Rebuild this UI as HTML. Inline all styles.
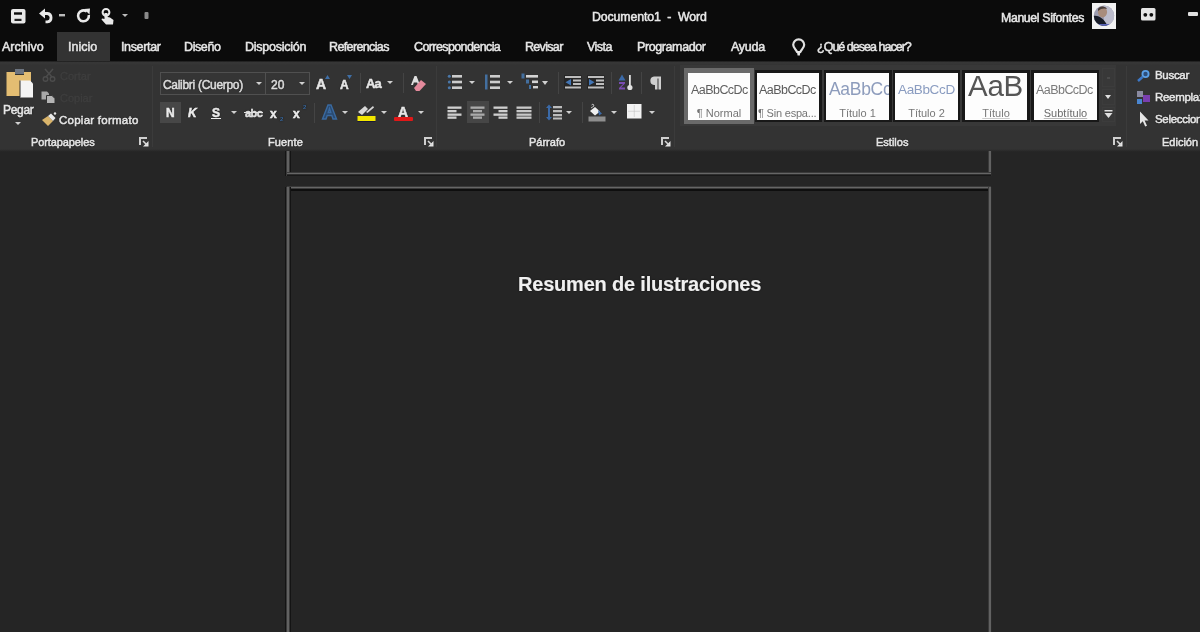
<!DOCTYPE html>
<html><head><meta charset="utf-8">
<style>
*{margin:0;padding:0;box-sizing:border-box}
html,body{width:1200px;height:632px;overflow:hidden;background:#252525}
body{position:relative;font-family:"Liberation Sans",sans-serif;color:#e8e8e8}
.a{position:absolute}
svg.a{overflow:visible}
.t{position:absolute;white-space:nowrap;line-height:1;-webkit-text-stroke:0.5px currentColor;will-change:transform;text-shadow:0 0 1.5px rgba(0,0,0,0.9)}
#top{left:0;top:0;width:1200px;height:61px;background:#0b0b0b}
#ribbon{left:0;top:61px;width:1200px;height:90px;background:#333}
.sep{position:absolute;width:1px;background:#444}
.gsep{position:absolute;width:1px;top:66px;height:81px;background:#3b3b3b}
.tab{font-size:12.5px;color:#e6e6e6;top:40.5px}
.lbl{font-size:11px;color:#e6e6e6;top:137px}
.arr{position:absolute;width:0;height:0;border-left:3px solid transparent;border-right:3px solid transparent;border-top:3px solid #d0d0d0}
.sty{position:absolute;top:73px;height:47px;background:#fdfdfd;overflow:hidden;border:0}
.sty .p{position:absolute;left:0;width:100%;text-align:center;white-space:nowrap;line-height:1;font-size:10px;color:#555;will-change:transform}
.sty .s{position:absolute;white-space:nowrap;line-height:1;will-change:transform}
</style></head><body>
<div id="top" class="a"></div>
<div id="ribbon" class="a"></div>
<div class="a" style="left:0;top:61px;width:1200px;height:4px;background:linear-gradient(#1a1a1a,#383838 40%,#333)"></div>
<div class="a" style="left:0;top:149px;width:1200px;height:3px;background:linear-gradient(#333,#242424)"></div>

<!-- QAT -->
<svg class="a" style="left:11px;top:9px" width="15" height="15" viewBox="0 0 15 15">
  <rect x="0" y="0" width="14.5" height="14.5" rx="2" fill="#e8e8e8"/>
  <rect x="3" y="3.3" width="8" height="2.4" fill="#0b0b0b"/>
  <rect x="3.5" y="9.8" width="7" height="2.2" fill="#222"/>
</svg>
<svg class="a" style="left:39px;top:8px" width="15" height="15" viewBox="0 0 15 15">
  <path d="M0 5.5 L6 0.5 L6 10.5 Z" fill="#e8e8e8"/>
  <path d="M4.5 5.5 H8.5 A4.2 4.2 0 0 1 8.5 13.8 H6.5" fill="none" stroke="#e8e8e8" stroke-width="2.8"/>
</svg>
<svg class="a" style="left:59px;top:14px" width="6" height="3"><rect width="6" height="2.4" fill="#bbb"/></svg>
<svg class="a" style="left:76px;top:8px" width="15" height="15" viewBox="0 0 15 15">
  <path d="M10.8 3.6 A5.4 5.4 0 1 0 12.8 7" fill="none" stroke="#e8e8e8" stroke-width="2.6"/>
  <path d="M8 1 L14 0.5 L13.5 6.5 Z" fill="#e8e8e8"/>
</svg>
<svg class="a" style="left:101px;top:8px" width="13" height="17" viewBox="0 0 13 17">
  <circle cx="5" cy="4.3" r="3.4" fill="none" stroke="#e8e8e8" stroke-width="2"/>
  <path d="M3.5 5 V11 L1 10.5 L0.5 11.5 L5 16.5 H12 L12.5 12 L9 9.5 L6.5 9 V5 Z" fill="#e8e8e8"/>
</svg>
<div class="arr" style="left:122px;top:14px;border-top-color:#bbb"></div>
<svg class="a" style="left:144px;top:12px" width="6" height="8"><rect x="0.5" y="0" width="4" height="7" rx="1" fill="#8a8a8a"/></svg>

<!-- title -->
<div class="t" style="left:592px;top:11px;font-size:12.3px;letter-spacing:-0.1px;color:#e8e8e8">Documento1&nbsp; -&nbsp; Word</div>
<div class="t" style="left:1001px;top:12px;font-size:12.3px;letter-spacing:-0.35px;color:#e8e8e8">Manuel Sifontes</div>
<svg class="a" style="left:1092px;top:3px" width="24" height="26" viewBox="0 0 24 26">
  <defs><clipPath id="av"><ellipse cx="12" cy="12.8" rx="10.2" ry="10.3"/></clipPath></defs>
  <rect x="0" y="0" width="24" height="26" fill="#f2f2f2"/>
  <g clip-path="url(#av)">
    <rect x="0" y="0" width="24" height="26" fill="#9c9cb0"/>
    <rect x="12" y="2" width="12" height="22" fill="#bcbccc"/>
    <ellipse cx="10.5" cy="9" rx="4.6" ry="5.4" fill="#a88c7c"/>
    <path d="M6 6 C7 3 13 2.5 15 6 C13 5 9 5 6 8 Z" fill="#4a3e3a"/>
    <path d="M1 13 C4 12 8 13.5 10 15.5 C13 18 15 21 16 25 H1 Z" fill="#181c28"/>
    <path d="M7 21 H18 V26 H7 Z" fill="#5a64b8"/>
  </g>
</svg>
<svg class="a" style="left:1141px;top:8px" width="15" height="13" viewBox="0 0 15 13">
  <rect x="0" y="0" width="14.5" height="12.5" rx="1.5" fill="#e4e4e4"/>
  <circle cx="4.3" cy="6.8" r="1.9" fill="#0b0b0b"/><circle cx="10.3" cy="6.8" r="1.9" fill="#0b0b0b"/>
</svg>
<div class="a" style="left:1188px;top:12px;width:10px;height:3.5px;background:#e0e0e0;border-radius:1px"></div>

<!-- tabs -->
<div class="a" style="left:57px;top:32px;width:53px;height:29px;background:#333"></div>
<div class="t tab" style="left:2px">Archivo</div>
<div class="t tab" style="left:68px">Inicio</div>
<div class="t tab" style="left:121px;letter-spacing:-0.35px">Insertar</div>
<div class="t tab" style="left:184px;letter-spacing:-0.4px">Diseño</div>
<div class="t tab" style="left:245px;letter-spacing:-0.25px">Disposición</div>
<div class="t tab" style="left:329px;letter-spacing:-0.63px">Referencias</div>
<div class="t tab" style="left:414px;letter-spacing:-0.6px">Correspondencia</div>
<div class="t tab" style="left:525px;letter-spacing:-0.68px">Revisar</div>
<div class="t tab" style="left:587px;letter-spacing:-0.55px">Vista</div>
<div class="t tab" style="left:637px;letter-spacing:-0.4px">Programador</div>
<div class="t tab" style="left:731px;letter-spacing:-0.25px">Ayuda</div>
<svg class="a" style="left:792px;top:38px" width="14" height="19" viewBox="0 0 14 19">
  <path d="M6.7 1.3 A5.5 5.5 0 0 1 12.2 6.8 C12.2 9.5 9.5 11.5 8.3 14 H5.1 C3.9 11.5 1.2 9.5 1.2 6.8 A5.5 5.5 0 0 1 6.7 1.3 Z" fill="none" stroke="#e0e0e0" stroke-width="2.2"/>
  <path d="M4.8 13 H8.6 L7.8 17.5 H5.6 Z" fill="#e8e8e8"/>
</svg>
<div class="t tab" style="left:817px;letter-spacing:-0.98px">¿Qué desea hacer?</div>

<!-- ===== Portapapeles ===== -->
<svg class="a" style="left:6px;top:68px" width="28" height="31" viewBox="0 0 28 31">
  <path d="M0.5 4 H9 V7 H18 V4 H25 V28 H0.5 Z" fill="#e3bd72"/>
  <rect x="9" y="1" width="9" height="5" fill="#6c7480"/>
  <path d="M14 12.5 H24 L27 15.5 V29.5 H14 Z" fill="#f4f4f4"/>
  <path d="M14 12.5 V29.5" stroke="#2e2e2e" stroke-width="1"/>
</svg>
<div class="t" style="left:3px;top:104px;font-size:12px;letter-spacing:-0.3px;color:#e6e6e6">Pegar</div>
<div class="arr" style="left:15px;top:122px"></div>

<svg class="a" style="left:42px;top:68px" width="14" height="14" viewBox="0 0 14 14">
  <path d="M3 1 L10 9 M11 1 L4 9" stroke="#4c4c4c" stroke-width="1.5"/>
  <circle cx="3.5" cy="11" r="2.3" fill="none" stroke="#4c4c4c" stroke-width="1.4"/>
  <circle cx="10.5" cy="11" r="2.3" fill="none" stroke="#4c4c4c" stroke-width="1.4"/>
</svg>
<div class="t" style="left:60px;top:71px;font-size:11px;color:#3e3e3e;text-shadow:none;-webkit-text-stroke:0.3px #3e3e3e">Cortar</div>
<svg class="a" style="left:41px;top:91px" width="15" height="13" viewBox="0 0 15 13">
  <path d="M0.5 0.5 H6 L8 2.5 V8.5 H0.5 Z" fill="#a8a8a8"/>
  <path d="M5.5 4.5 H11 L14 7.5 V12.5 H5.5 Z" fill="#b4b4b4" stroke="#333" stroke-width="1"/>
</svg>
<div class="t" style="left:60px;top:93px;font-size:11px;color:#3e3e3e;text-shadow:none;-webkit-text-stroke:0.3px #3e3e3e">Copiar</div>
<svg class="a" style="left:41px;top:112px" width="16" height="15" viewBox="0 0 16 15">
  <path d="M1 8 L7 4 L12 9 L7 14 Z" fill="#d9b46a"/>
  <path d="M7 4 L10 1.5 L14.5 6 L12 9 Z" fill="#e8e8e8"/>
  <circle cx="14" cy="1.5" r="1.2" fill="#e8e8e8"/>
</svg>
<div class="t" style="left:59px;top:115px;font-size:11.5px;letter-spacing:0.25px;color:#e6e6e6">Copiar formato</div>

<div class="t lbl" style="left:31px;letter-spacing:-0.1px">Portapapeles</div>
<svg class="a dl" style="left:139px;top:137px" width="10" height="10" viewBox="0 0 10 10">
  <path d="M0 0 H8 V2 H2 V8 H0 Z" fill="#cfcfcf"/>
  <path d="M9.5 4 V9.5 H4 Z" fill="#e6e6e6"/>
  <path d="M4 4 L8 8" stroke="#d8d8d8" stroke-width="1.6"/>
</svg>
<div class="gsep" style="left:152px"></div>

<!-- page -->
<div class="a" style="left:285px;top:151px;width:6px;height:25px;background:linear-gradient(90deg,#141414 0,#141414 1px,#3a3a3a 1px,#3a3a3a 2px,#626262 2px,#626262 4px,#3a3a3a 4px,#3a3a3a 5px,#141414 5px)"></div>
<div class="a" style="left:988px;top:151px;width:4px;height:25px;background:linear-gradient(90deg,#3a3a3a 0,#3a3a3a 1px,#626262 1px,#626262 3px,#2a2a2a 3px)"></div>
<div class="a" style="left:287px;top:172px;width:704px;height:4px;background:linear-gradient(#3a3a3a 0,#3a3a3a 1px,#666 1px,#666 2px,#2e2e2e 2px,#2e2e2e 3px,#181818 3px)"></div>
<div class="a" style="left:287px;top:186px;width:704px;height:5px;background:linear-gradient(#3a3a3a 0,#3a3a3a 1px,#666 1px,#666 2px,#3a3a3a 2px,#3a3a3a 3px,#0e0e0e 3px)"></div>
<div class="a" style="left:285px;top:187px;width:6px;height:445px;background:linear-gradient(90deg,#141414 0,#141414 1px,#3a3a3a 1px,#3a3a3a 2px,#626262 2px,#626262 4px,#3a3a3a 4px,#3a3a3a 5px,#141414 5px)"></div>
<div class="a" style="left:988px;top:187px;width:4px;height:445px;background:linear-gradient(90deg,#3a3a3a 0,#3a3a3a 1px,#626262 1px,#626262 3px,#2a2a2a 3px)"></div>
<div class="t" style="left:518px;top:273.5px;font-size:20px;font-weight:700;letter-spacing:-0.2px;color:#f0f0f0;-webkit-text-stroke:0.15px #f0f0f0">Resumen de ilustraciones</div>

<!-- ===== Fuente ===== -->
<div class="a" style="left:160px;top:72px;width:106px;height:23px;background:#353535;border:1px solid #505050"></div>
<div class="a" style="left:265px;top:72px;width:45px;height:23px;background:#353535;border:1px solid #505050"></div>
<div class="t" style="left:163px;top:79px;font-size:12px;letter-spacing:-0.3px;color:#dedede">Calibri (Cuerpo)</div>
<div class="arr" style="left:256px;top:82px"></div>
<div class="t" style="left:271px;top:79px;font-size:12px;color:#dedede">20</div>
<div class="arr" style="left:299px;top:82px"></div>

<div class="a" style="left:160px;top:102px;width:21px;height:21px;background:#474747"></div>
<div class="t" style="left:166px;top:107px;font-size:12px;font-weight:700;color:#ececec">N</div>
<div class="t" style="left:188px;top:107px;font-size:12px;font-weight:700;font-style:italic;color:#ececec">K</div>
<div class="t" style="left:212px;top:107px;font-size:12px;font-weight:700;color:#ececec">S</div>
<div class="a" style="left:211px;top:118px;width:10px;height:1px;background:#ececec"></div>
<div class="arr" style="left:231px;top:111px"></div>
<div class="t" style="left:245px;top:108px;font-size:11px;font-weight:700;letter-spacing:-0.6px;color:#e0e0e0">abc</div>
<div class="a" style="left:244px;top:112px;width:19px;height:1px;background:#e0e0e0"></div>
<div class="t" style="left:270px;top:108px;font-size:12px;font-weight:700;color:#ececec">x</div>
<div class="t" style="left:280px;top:116px;font-size:6px;font-weight:700;color:#3a6aa0;-webkit-text-stroke:0">2</div>
<div class="t" style="left:293px;top:108px;font-size:12px;font-weight:700;color:#ececec">x</div>
<div class="t" style="left:303px;top:104px;font-size:6px;font-weight:700;color:#3a6aa0;-webkit-text-stroke:0">2</div>
<div class="sep" style="left:314px;top:103px;height:20px"></div>

<div class="t" style="left:316px;top:77px;font-size:14px;font-weight:700;color:#e6e6e6">A</div>
<svg class="a" style="left:325px;top:75px" width="5" height="4"><path d="M0 4 L2.5 0 L5 4 Z" fill="#3f6fa6"/></svg>
<div class="t" style="left:340px;top:79px;font-size:12px;font-weight:700;color:#e6e6e6">A</div>
<svg class="a" style="left:347px;top:75px" width="5" height="4"><path d="M0 0 L5 0 L2.5 4 Z" fill="#3f6fa6"/></svg>
<div class="sep" style="left:360px;top:73px;height:20px"></div>
<div class="t" style="left:366px;top:77px;font-size:13px;font-weight:700;letter-spacing:-0.8px;color:#e6e6e6">Aa</div>
<div class="arr" style="left:387px;top:81px"></div>
<div class="sep" style="left:403px;top:73px;height:20px"></div>
<svg class="a" style="left:410px;top:75px" width="18" height="17" viewBox="0 0 18 17">
  <path d="M1 10 L4.5 1 H6.5 L10 10 H8 L7.2 7.5 H3.8 L3 10 Z" fill="#e0e0e0"/>
  <path d="M4 13 L11 5 L16 9 L9.5 16 H6 Z" fill="#e48a9c"/>
</svg>

<svg class="a" style="left:321px;top:104px" width="17" height="16" viewBox="0 0 17 16">
  <path d="M1.5 15 L7 1 H10 L15.5 15 H12 L10.8 11.5 H6.2 L5 15 Z M7.2 8.5 H9.8 L8.5 4.5 Z" fill="#2a4a70" stroke="#3a6aa0" stroke-width="1.4"/>
</svg>
<div class="arr" style="left:342px;top:111px"></div>
<svg class="a" style="left:357px;top:104px" width="19" height="18" viewBox="0 0 19 18">
  <path d="M1 8 L8 2 L11 5 L5 11 Z" fill="#d8d8d8"/>
  <path d="M9 8 L16 2 L17 3.5 L10.5 9 Z" fill="#d8d8d8"/>
  <rect x="0.5" y="12" width="18" height="5" fill="#f2e600"/>
  <rect x="0.5" y="17" width="18" height="1" fill="#181838"/>
</svg>
<div class="arr" style="left:381px;top:111px"></div>
<div class="t" style="left:398px;top:105px;font-size:14px;font-weight:700;color:#e6e6e6">A</div>
<div class="a" style="left:394px;top:117px;width:19px;height:4px;background:#e01818;border-radius:1px"></div>
<div class="arr" style="left:418px;top:111px"></div>

<div class="t lbl" style="left:268px;letter-spacing:0.1px">Fuente</div>
<svg class="a dl" style="left:424px;top:137px" width="10" height="10" viewBox="0 0 10 10">
  <path d="M0 0 H8 V2 H2 V8 H0 Z" fill="#cfcfcf"/>
  <path d="M9.5 4 V9.5 H4 Z" fill="#e6e6e6"/>
  <path d="M4 4 L8 8" stroke="#d8d8d8" stroke-width="1.6"/>
</svg>
<div class="gsep" style="left:436px"></div>

<!-- ===== Parrafo ===== -->
<svg class="a" style="left:447px;top:74px" width="16" height="16" viewBox="0 0 16 16">
  <g fill="#4a78aa"><circle cx="2.3" cy="2.3" r="1.5"/><circle cx="2.3" cy="8" r="1.5"/><circle cx="2.3" cy="13.7" r="1.5"/></g>
  <g fill="#cccccc"><rect x="5" y="1" width="10" height="2.6"/><rect x="5" y="6.7" width="10" height="2.6"/><rect x="5" y="12.4" width="10" height="2.6"/></g>
</svg>
<div class="arr" style="left:469px;top:81px"></div>
<svg class="a" style="left:485px;top:74px" width="16" height="16" viewBox="0 0 16 16">
  <rect x="0" y="0.5" width="2.5" height="15" fill="#436f9f"/>
  <g fill="#cccccc"><rect x="5" y="1" width="10" height="2.6"/><rect x="5" y="6.7" width="10" height="2.6"/><rect x="5" y="12.4" width="10" height="2.6"/></g>
</svg>
<div class="arr" style="left:507px;top:81px"></div>
<svg class="a" style="left:521px;top:73px" width="18" height="17" viewBox="0 0 18 17">
  <g fill="#436f9f"><rect x="0.5" y="0.5" width="3" height="5"/><rect x="5" y="6.5" width="3" height="4"/><rect x="8" y="12" width="2" height="4"/></g>
  <g fill="#d4d4d4"><rect x="5" y="2" width="12" height="2.6"/><rect x="11" y="7.5" width="6" height="2.6"/><rect x="12" y="13" width="5" height="2.4"/></g>
</svg>
<div class="arr" style="left:542px;top:81px;border-left-width:3.5px;border-right-width:3.5px;border-top-width:4px"></div>
<div class="sep" style="left:558px;top:72px;height:22px"></div>
<svg class="a" style="left:564px;top:75px" width="18" height="15" viewBox="0 0 18 15">
  <rect x="0" y="0" width="17.5" height="14.5" fill="#262626"/>
  <g fill="#bdbdbd"><rect x="1" y="1" width="16" height="2"/><rect x="9" y="4.5" width="8" height="2"/><rect x="9" y="8" width="8" height="2"/><rect x="1" y="11.5" width="16" height="2"/></g>
  <path d="M1.5 7.3 L7 4 V10.5 Z" fill="#4275b5"/>
</svg>
<svg class="a" style="left:587px;top:75px" width="18" height="15" viewBox="0 0 18 15">
  <rect x="0" y="0" width="17.5" height="14.5" fill="#262626"/>
  <g fill="#bdbdbd"><rect x="1" y="1" width="16" height="2"/><rect x="9" y="4.5" width="8" height="2"/><rect x="9" y="8" width="8" height="2"/><rect x="1" y="11.5" width="16" height="2"/></g>
  <path d="M7.5 7.3 L2 4 V10.5 Z" fill="#4275b5"/>
</svg>
<div class="sep" style="left:611px;top:72px;height:22px"></div>
<svg class="a" style="left:618px;top:74px" width="17" height="17" viewBox="0 0 17 17">
  <path d="M4 0.5 L7.5 6.5 H0.5 Z" fill="#3b6aa8"/>
  <path d="M1 8 H7 V9.5 L3 13.5 H7 V15.5 H1 V14 L5 10 H1 Z" fill="#7a4cb0"/>
  <rect x="11" y="1" width="1.8" height="11" fill="#e0e0e0"/>
  <circle cx="11.9" cy="13.5" r="2.6" fill="#e0e0e0"/>
</svg>
<div class="sep" style="left:641px;top:72px;height:22px"></div>
<svg class="a" style="left:649px;top:76px" width="13" height="14" viewBox="0 0 13 14">
  <path d="M12 0.5 H5 A4.3 4.3 0 0 0 5 9 H6 V13.5 H8.5 V2.5 H9.5 V13.5 H12 Z" fill="#cfcfcf"/>
</svg>

<svg class="a" style="left:447px;top:106px" width="16" height="13" viewBox="0 0 16 13">
  <g fill="#cfcfcf"><rect x="0.5" y="0.5" width="14" height="2.3"/><rect x="0.5" y="4" width="9" height="2.3"/><rect x="0.5" y="7.5" width="14" height="2.3"/><rect x="0.5" y="10.5" width="9" height="2.3"/></g>
</svg>
<div class="a" style="left:467px;top:101px;width:22px;height:22px;background:#464646"></div>
<svg class="a" style="left:470px;top:106px" width="16" height="13" viewBox="0 0 16 13">
  <g fill="#ababab"><rect x="0.5" y="0.5" width="14" height="2.3"/><rect x="3" y="4" width="9" height="2.3"/><rect x="0.5" y="7.5" width="14" height="2.3"/><rect x="3" y="10.5" width="9" height="2.3"/></g>
</svg>
<svg class="a" style="left:493px;top:106px" width="16" height="13" viewBox="0 0 16 13">
  <g fill="#cfcfcf"><rect x="0.5" y="0.5" width="14" height="2.3"/><rect x="5.5" y="4" width="9" height="2.3"/><rect x="0.5" y="7.5" width="14" height="2.3"/><rect x="5.5" y="10.5" width="9" height="2.3"/></g>
</svg>
<svg class="a" style="left:516px;top:106px" width="16" height="13" viewBox="0 0 16 13">
  <g fill="#c8c8c8"><rect x="0.5" y="0.5" width="15" height="2.3"/><rect x="0.5" y="4" width="15" height="2.3"/><rect x="0.5" y="7.5" width="15" height="2.3"/><rect x="0.5" y="10.5" width="15" height="2.3"/></g>
</svg>
<div class="sep" style="left:539px;top:102px;height:21px"></div>
<svg class="a" style="left:546px;top:104px" width="16" height="17" viewBox="0 0 16 17">
  <path d="M3 0.5 L6 4 H4 V13 H6 L3 16.5 L0 13 H2 V4 H0 Z" fill="#3b6aa8"/>
  <g fill="#bdbdbd"><rect x="7" y="2" width="9" height="2.3"/><rect x="7" y="6" width="9" height="2.3"/><rect x="7" y="10" width="9" height="2.3"/><rect x="7" y="13.5" width="9" height="2"/></g>
</svg>
<div class="arr" style="left:566px;top:111px"></div>
<div class="sep" style="left:582px;top:102px;height:21px"></div>
<svg class="a" style="left:588px;top:104px" width="18" height="18" viewBox="0 0 18 18">
  <path d="M3.5 1 L5 0 L6 2 L3 4" stroke="#bbb" stroke-width="1" fill="none"/>
  <path d="M2 7 L7 3 L12 7.5 L7 11.5 Z" fill="#f0f0f0"/>
  <path d="M10 6 L14 9.5 L11 11.5 Z" fill="#3b6aa8"/>
  <rect x="0.5" y="12.5" width="17" height="5" fill="#8e8e8e"/>
</svg>
<div class="arr" style="left:611px;top:111px"></div>
<svg class="a" style="left:627px;top:104px" width="15" height="15" viewBox="0 0 15 15">
  <rect x="0" y="0" width="14.5" height="14.5" fill="#f2f2f2"/>
  <path d="M7.25 1.5 V13 M1.5 7.25 H13" stroke="#b8b8b8" stroke-width="1" stroke-dasharray="1 1"/>
</svg>
<div class="arr" style="left:649px;top:111px"></div>

<div class="t lbl" style="left:529px">Párrafo</div>
<svg class="a dl" style="left:661px;top:137px" width="10" height="10" viewBox="0 0 10 10">
  <path d="M0 0 H8 V2 H2 V8 H0 Z" fill="#cfcfcf"/>
  <path d="M9.5 4 V9.5 H4 Z" fill="#e6e6e6"/>
  <path d="M4 4 L8 8" stroke="#d8d8d8" stroke-width="1.6"/>
</svg>
<div class="gsep" style="left:674px"></div>

<!-- ===== Estilos ===== -->
<div class="a" style="left:680px;top:65px;width:436px;height:61px;background:#383838"></div>
<div class="a" style="left:1102px;top:68px;width:13px;height:19px;border:1px solid #3c3c3c"></div>
<div class="a" style="left:1102px;top:89px;width:13px;height:16px;border:1px solid #3c3c3c"></div>
<div class="a" style="left:1102px;top:107px;width:13px;height:15px;border:1px solid #3c3c3c"></div>
<div class="a" style="left:684px;top:68px;width:70px;height:56px;background:#6a6a6a"></div>
<div class="a" style="left:755px;top:70px;width:67px;height:52px;background:#181818"></div>
<div class="a" style="left:824px;top:70px;width:68px;height:52px;background:#181818"></div>
<div class="a" style="left:893px;top:70px;width:67px;height:52px;background:#181818"></div>
<div class="a" style="left:962px;top:70px;width:68px;height:52px;background:#181818"></div>
<div class="a" style="left:1031px;top:70px;width:68px;height:52px;background:#181818"></div>

<div class="sty" style="left:688px;width:62px">
  <div class="s" style="left:3px;top:11px;font-size:12.5px;letter-spacing:-0.55px;color:#606060">AaBbCcDc</div>
  <div class="p" style="top:35px;font-size:11px;color:#747474">¶ Normal</div>
</div>
<div class="sty" style="left:757px;width:62px">
  <div class="s" style="left:2px;top:11px;font-size:12.5px;letter-spacing:-0.55px;color:#5a5a5a">AaBbCcDc</div>
  <div class="s" style="left:1px;top:35px;font-size:11px;letter-spacing:-0.2px;color:#747474">¶ Sin espa...</div>
</div>
<div class="sty" style="left:826px;width:63px">
  <div class="s" style="left:3px;top:8px;font-size:17.5px;letter-spacing:-0.3px;color:#8d9cbc">AaBbCc</div>
  <div class="p" style="top:35px;font-size:11px;color:#777">Título 1</div>
</div>
<div class="sty" style="left:895px;width:63px">
  <div class="s" style="left:3px;top:10px;font-size:13.5px;letter-spacing:-0.35px;color:#8a9cc0">AaBbCcD</div>
  <div class="p" style="top:35px;font-size:11px;color:#777">Título 2</div>
</div>
<div class="sty" style="left:965px;width:62px">
  <div class="s" style="left:3px;top:-2.5px;font-size:29.5px;letter-spacing:-0.3px;color:#555;font-weight:400">AaB</div>
  <div class="p" style="top:35px;font-size:11px;color:#7a7a7a;text-decoration:underline;text-decoration-color:#ccc">Título</div>
</div>
<div class="sty" style="left:1034px;width:63px">
  <div class="s" style="left:2px;top:11px;font-size:12.5px;letter-spacing:-0.55px;color:#7a7a7a">AaBbCcDc</div>
  <div class="p" style="top:35px;font-size:11px;color:#6a6a6a;text-decoration:underline;text-decoration-color:#bbb">Subtítulo</div>
</div>
<div class="a" style="left:1107px;top:77px;width:3px;height:2px;background:#4a4a4a"></div>
<div class="arr" style="left:1105px;top:95px;border-top-color:#e0e0e0;border-left-width:3.5px;border-right-width:3.5px;border-top-width:4px"></div>
<svg class="a" style="left:1104px;top:110px" width="9" height="9" viewBox="0 0 9 9"><rect x="0.5" y="0" width="8" height="1.5" fill="#e0e0e0"/><path d="M0.5 3 H8.5 L4.5 8 Z" fill="#e0e0e0"/></svg>

<div class="t lbl" style="left:876px">Estilos</div>
<svg class="a dl" style="left:1113px;top:137px" width="10" height="10" viewBox="0 0 10 10">
  <path d="M0 0 H8 V2 H2 V8 H0 Z" fill="#cfcfcf"/>
  <path d="M9.5 4 V9.5 H4 Z" fill="#e6e6e6"/>
  <path d="M4 4 L8 8" stroke="#d8d8d8" stroke-width="1.6"/>
</svg>
<div class="gsep" style="left:1126px"></div>

<!-- ===== Edicion ===== -->
<svg class="a" style="left:1137px;top:69px" width="14" height="13" viewBox="0 0 14 13">
  <circle cx="8.5" cy="5" r="4" fill="#5aa0e8"/>
  <circle cx="8.5" cy="5" r="2.2" fill="#2e4e7a"/>
  <path d="M5.5 8 L1 12" stroke="#3c78c8" stroke-width="2.5"/>
</svg>
<div class="t" style="left:1155px;top:70px;font-size:11.5px;letter-spacing:-0.3px;color:#e6e6e6">Buscar</div>
<svg class="a" style="left:1136px;top:90px" width="15" height="15" viewBox="0 0 15 15">
  <rect x="1" y="1" width="6" height="6" fill="#8a8aa0"/>
  <rect x="7" y="5" width="7" height="7" fill="#7a3fb0"/>
  <rect x="1" y="9" width="5" height="5" fill="#4a86d0"/>
</svg>
<div class="t" style="left:1155px;top:92px;font-size:11.5px;letter-spacing:-0.3px;color:#e6e6e6">Reemplazar</div>
<svg class="a" style="left:1139px;top:111px" width="10" height="16" viewBox="0 0 10 16">
  <path d="M1 0.5 V13 L3.8 10.2 L6.2 15.5 L8 14.7 L5.6 9.6 H9.5 Z" fill="#e6e6e6"/>
</svg>
<div class="t" style="left:1155px;top:114px;font-size:11.5px;letter-spacing:-0.3px;color:#e6e6e6">Seleccionar</div>
<div class="t lbl" style="left:1162px">Edición</div>
</body></html>
